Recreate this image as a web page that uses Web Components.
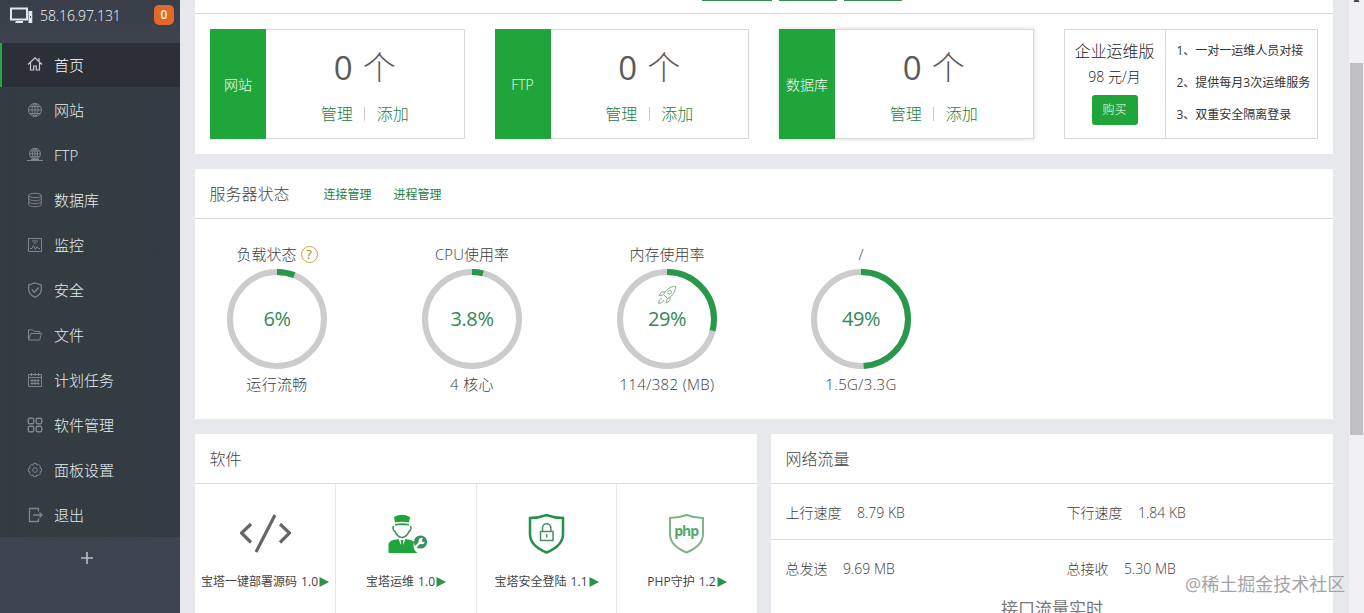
<!DOCTYPE html>
<html lang="zh-CN">
<head>
<meta charset="utf-8">
<title>服务器面板</title>
<style>
html,body{margin:0;height:100%;overflow:hidden}
body{font-family:"Open Sans","Noto Sans CJK SC",sans-serif;font-weight:300;font-size:14px;color:#444}
</style>
</head>
<body>
<panel-app></panel-app>
<script>
const define=(name,html)=>customElements.define(name,class extends HTMLElement{
  connectedCallback(){
    if(this.shadowRoot)return;
    const t=document.createElement('template');
    t.innerHTML='<style>*{box-sizing:border-box}:host{box-sizing:border-box;white-space:nowrap}</style>'+(typeof html==='function'?html(this):html);
    this.attachShadow({mode:'open'}).append(t.content.cloneNode(true));
  }
});
const a=(el,n,d='')=>el.getAttribute(n)??d;

const ICONS={
home:'<path d="M1 8.500 8 1.800 15 8.500M3.500 6.800V14h3.200v-4h2.600v4h3.200V6.800M12 2v3"/>',
globe:'<circle cx="8" cy="8" r="6.500"/><ellipse cx="8" cy="8" rx="3" ry="6.500"/><path d="M8 1.500v13M1.500 8h13M2.600 4.500h10.800M2.600 11.500h10.800"/>',
ftp:'<circle cx="8" cy="6.800" r="5.500"/><ellipse cx="8" cy="6.800" rx="2.500" ry="5.500"/><path d="M8 1.300v11M2.500 6.800h11M3.500 4h9M3.500 9.700h9M0 13.500h16M4 12.500h8"/>',
db:'<ellipse cx="8" cy="3.500" rx="6.300" ry="2.200"/><path d="M1.700 3.500v9c0 1.200 2.800 2.200 6.300 2.200s6.300-1 6.300-2.200v-9M1.700 6.500c0 1.200 2.800 2.200 6.300 2.200s6.300-1 6.300-2.200M1.700 9.500c0 1.200 2.800 2.200 6.300 2.200s6.300-1 6.300-2.200"/>',
monitor:'<path d="M1.500 1.500h13v13h-13zM5 4h6M6.500 6h3M3 11.500h2l1.500-3 2 4 1.500-3 1.500 2H13"/>',
shield:'<path stroke-width="1.300" d="M8 1 14.300 3v4.500c0 4-3 6.300-6.300 7.800-3.300-1.500-6.300-3.800-6.300-7.800V3zM4.800 7.500l2.500 2.700 4.300-4.700"/>',
folder:'<path d="M1.500 13V2.800h4.300l1.400 1.700h5.600v2M1.500 13l2.300-6.500h10.700L12.600 13z"/>',
calendar:'<path d="M1.500 2.500h13v12h-13zM1.500 5.500h13M4.500 1v3M8 1v3M11.500 1v3M3.500 8.500h9M3.500 11.500h9M5 7v6M8 7v6M11 7v6"/>',
grid:'<g stroke-width="1.400"><rect x="1.300" y="1.300" width="5.400" height="5.400" rx="1.200"/><rect x="9.300" y="1.300" width="5.400" height="5.400" rx="1.200"/><rect x="1.300" y="9.300" width="5.400" height="5.400" rx="1.200"/><rect x="9.300" y="9.300" width="5.400" height="5.400" rx="1.200"/></g>',
gear:'<circle cx="8" cy="8" r="2.300"/><path d="M6.700 1.400h2.600l.5 1.700 1.800-.6 1.900 1.900-.7 1.700 1.800.6v2.600l-1.800.6.7 1.800-1.900 1.800-1.800-.7-.5 1.800H6.700l-.5-1.800-1.800.7-1.900-1.800.7-1.800-1.800-.6V6.700l1.800-.6-.7-1.700 1.900-1.900 1.800.6z"/>',
exit:'<path stroke-width="1.300" d="M11.500 4.500v-3h-9v13h9v-3M6 8h9M12.500 5.500 15 8l-2.500 2.500"/>'
};

define('nav-item',el=>`<style>
:host{display:flex;align-items:center;height:45px;padding:0 0 2px 27px;font-size:15px;color:#e4eef0}
:host([active]){background:#2b2f38;border-left:2px solid #29a643;padding-left:25px;height:44px;color:#fff}
svg{width:16px;height:16px;margin-right:11px;fill:none;stroke:#7c888c;stroke-width:1}
:host([active]) svg{stroke:#c4cbd2;stroke-width:1.200}
</style><svg viewBox="0 0 16 16">${ICONS[a(el,'icon')]}</svg><slot></slot>`);

define('side-bar',`<style>
:host{display:flex;flex-direction:column;width:180px;height:613px;background:#3d434f}
header{display:flex;align-items:center;height:43px;padding:0 6px 13px 10px;color:#f2f7fa;font-size:14px;background:linear-gradient(#393e49,#3e444f)}
header svg{width:23px;height:17px;margin-right:7px}
.ip{flex:1;letter-spacing:-.1px}
.badge{width:20px;height:20px;border-radius:5px;background:#e2692c;color:#fff3d8;font-size:12px;font-weight:600;line-height:20px;text-align:center}
nav{background:linear-gradient(90deg,#333b43,#333d41 30%,#343c42 60%,#353a45);height:494px}
nav-item[active]+nav-item{margin-top:1px}
footer{padding:14px 0 0 80px}
footer svg{display:block;width:14px;height:14px;stroke:#b9c0c7;stroke-width:1.600}
</style>
<header><svg viewBox="0 0 23 17"><path d="M1 1.500h16v11H1z" fill="none" stroke="#dde9ef" stroke-width="2"/><path d="M6 14h7v2H5z" fill="#dde9ef"/><rect x="18.500" y="4" width="3.800" height="12" fill="#dde9ef"/><path d="M20.500 9v2" stroke="#4a5560"/></svg><span class="ip">58.16.97.131</span><span class="badge">0</span></header>
<nav>
<nav-item icon="home" active>首页</nav-item><nav-item icon="globe">网站</nav-item><nav-item icon="ftp">FTP</nav-item><nav-item icon="db">数据库</nav-item><nav-item icon="monitor">监控</nav-item><nav-item icon="shield">安全</nav-item><nav-item icon="folder">文件</nav-item><nav-item icon="calendar">计划任务</nav-item><nav-item icon="grid">软件管理</nav-item><nav-item icon="gear">面板设置</nav-item><nav-item icon="exit">退出</nav-item>
</nav><footer><svg viewBox="0 0 14 14"><path d="M7 1v12M1 7h12"/></svg></footer>`);

define('count-card',el=>`<style>
:host{display:flex;height:110px;border:1px solid #d9d9d9}
:host([raised]){box-shadow:0 0 4px rgba(0,0,0,.18)}
.tag{width:56px;margin:-1px 0 -1px -1px;background:#20a53a;color:#f6fff4;font-size:14px;display:flex;align-items:center;justify-content:center}
.body{flex:1;display:flex;flex-direction:column;align-items:center}
.num{font-size:33px;line-height:40px;margin-top:18px;color:#5a5a5a;display:flex;gap:10px}
.num span:first-child{font-weight:400}
.links{display:flex;align-items:center;font-size:16px;line-height:20px;margin-top:16px;color:#1f7d3e}
i{width:1px;height:14px;background:#ccc;margin:0 11.500px}
</style><div class="tag"><slot></slot></div><div class="body"><div class="num"><span>0</span><span>个</span></div><div class="links"><span>管理</span><i></i><span>添加</span></div></div>`);

define('plan-card',`<style>
:host{display:flex;height:110px;border:1px solid #d9d9d9;color:#222}
.l{width:101px;border-right:1px solid #d9d9d9;display:flex;flex-direction:column;align-items:center;padding-top:9px}
.t{font-size:16px;line-height:24px}.p{font-size:14px;line-height:20px;margin-top:4px}
.b{width:46px;height:30px;margin-top:8px;border-radius:3px;background:#20a53a;color:#f6fff4;font-size:12px;line-height:29px;text-align:center}
.r{padding:5px 0 0 11px;font-size:12px;line-height:32px;font-weight:400;color:#333}
</style><div class="l"><span class="t">企业运维版</span><span class="p">98 元/月</span><span class="b">购买</span></div>
<div class="r"><div>1、一对一运维人员对接</div><div>2、提供每月3次运维服务</div><div>3、双重安全隔离登录</div></div>`);

define('top-panel',`<style>
:host{display:flex;flex-direction:column;height:154px;background:#fff}
.bar{height:14px;border-bottom:1px solid #d9d9d9;display:flex;gap:7px;padding-left:507px}
.bar b{height:1px;background:#3c8f50;width:58px}.bar b:first-child{width:70px}
.row{display:grid;grid-template-columns:repeat(4,1fr);gap:30px;padding:15px 15px 0}
</style><div class="bar"><b></b><b></b><b></b></div><div class="row"><count-card>网站</count-card><count-card>FTP</count-card><count-card raised>数据库</count-card><plan-card></plan-card></div>`);

define('panel-box',`<style>
:host{display:block;background:#fff}
header{height:50px;border-bottom:1px solid #ddd;display:flex;align-items:center;padding:0 15px 1px 14.500px;font-size:16px;color:#444}
</style><header><slot name="head"></slot></header><slot></slot>`);

define('ring-gauge',el=>{const v=+a(el,'value'),r=47,c=2*Math.PI*r;return `<style>
:host{display:flex;flex-direction:column;align-items:center;font-size:15px;color:#3c3c3c}
.lab{height:20px;line-height:20px;display:flex;align-items:center;gap:4px}
.note{letter-spacing:.35px}
.ring{display:grid;width:100px;height:100px;margin:5px 0;place-items:center}
.ring>*{grid-area:1/1}
svg.c{width:100px;height:100px;fill:none;stroke-width:6}
.v{font-size:20px;line-height:24px;color:#2f8a55;font-weight:400;letter-spacing:-.4px}
.rk{align-self:start;margin-top:16px;width:20px;height:20px;fill:none;stroke:#7fae90}
.q{width:17px;height:17px;border:1px solid #c5a64a;border-radius:50%;color:#a8832a;font-size:13px;line-height:15px;text-align:center;font-weight:400}
</style><div class="lab"><slot></slot>${el.hasAttribute('help')?'<span class="q">?</span>':''}</div>
<div class="ring"><svg class="c" viewBox="0 0 100 100"><circle cx="50" cy="50" r="${r}" stroke="#ccc"/><circle cx="50" cy="50" r="${r}" stroke="#28994a" transform="rotate(-90 50 50)" stroke-dasharray="${c*v/100} ${c}"/></svg>
${el.hasAttribute('rocket')?'<svg class="rk" viewBox="0 0 20 20"><path d="M18.500 1.500C13 1.500 9.500 4 6.500 9.500l4 4C16 10.500 18.500 7 18.500 1.500zM8 7H4.500L2 10.500l4-.5M13 12v3.500L9.500 18l.5-4M5 13c-2 .5-3 2.500-3.500 5.500C4.500 18 6.500 17 7 15"/><circle cx="12.700" cy="7.300" r="1.800"/></svg>':''}
<span class="v">${a(el,'text')}</span></div><div class="lab note">${a(el,'note')}</div>`});

const SOFT={
code:'<path d="M11 10 1.500 19 11 28.500M40 10l9.500 9L40 28.500M35 1 16 38" fill="none" stroke="#666" stroke-width="3.200"/>',
police:'<g transform="translate(6.500 0)"><path d="M6.500 3q8-4.500 16 0l-1 5.500q-7-1.500-14 0zM7.500 10q7-1.500 14 0v1.500q-7-1-14 0z" fill="#20a53a"/><path d="M6.500 12.500c-2 0-1 4 1 5 1 3 4 6 7 6s6-3 7-6c2-1 3-5 1-5" fill="none" stroke="#4b8b6d" stroke-width="1.600"/><path d="M1 39V31q0-4 5-5l5-1 3.500 9 3.500-9 5 1 3.500 1.500q-2 8 3.500 11.500zM13 26h3l-.7 2 1 7-1.800 3-1.800-3 1-7z" fill="#20a53a"/><circle cx="33" cy="28" r="6.600" fill="#3d8f5b"/><path d="m28 33 5-5" stroke="#fff" stroke-width="2.200"/><path d="M35.500 24a3.200 3.200 0 1 0 1.800 4l-2.500-.3-.5-1.500z" fill="#fff"/></g>',
lock:'<g transform="translate(-1 -.5)" fill="none" stroke="#25904a"><path d="M25.500 1.500q-8 3-16.500 3v16c0 10 8 15 16.500 18.500C34 35.500 42 30.500 42 20.500v-16q-8.500 0-16.500-3z" stroke-width="2.500"/><path d="M19.500 18h12.500v9H19.500zM21.500 18v-3.500a4.200 4.200 0 0 1 8.400 0V18M25.700 20.500v3.500" stroke-width="1.500" stroke="#4f8d6b"/></g>',
php:'<g transform="translate(-1 -.5)"><path d="M25.500 1.500q-8 3-16.500 3v16c0 10 8 15 16.500 18.500C34 35.500 42 30.500 42 20.500v-16q-8.500 0-16.500-3z" fill="none" stroke="#7fb38a" stroke-width="2"/><text x="25.700" y="22" text-anchor="middle" font-family="Open Sans" font-size="14" font-weight="700" textLength="25" fill="#55a86a">php</text></g>'
};
define('soft-item',el=>`<style>
:host{display:flex;flex-direction:column;align-items:center;padding:30px 0 0 1px;border-right:1px solid #e6e6e6;height:129px;font-size:12px;color:#444;font-weight:400}
:host(:last-child){border:0}
svg.i{width:51px;height:40px}
div{display:flex;align-items:center;margin:19px 1px 0 0;line-height:18px;gap:1px;word-spacing:1px}
.p{width:10px;height:10px;fill:#2f9149}
</style><svg class="i" viewBox="0 0 51 40">${SOFT[a(el,'icon')]}</svg><div><slot></slot><svg class="p" viewBox="0 0 10 10"><path d="M.5 0 10 5 .5 10z"/></svg></div>`);

define('net-row',el=>`<style>
:host{display:grid;grid-template-columns:281px 1fr;height:56px;padding:0 15px 0 14.500px;align-items:center;font-size:14px;color:#3c3c3c}
:host([line]){border-bottom:1px solid #ddd}
span{display:flex;gap:15.500px}
b{font-weight:inherit}
b+b{padding-top:1px}
</style>${a(el,'items').split('|').map(p=>{const [k,v]=p.split(':');return `<span><b>${k}</b><b>${v}</b></span>`}).join('')}`);

define('scroll-track',`<style>
:host{display:flex;flex-direction:column;width:15px;height:613px;background:#f1f1f3;padding:0 1px}
svg{height:3px;width:13px;margin-bottom:60px}
i{height:372px;background:#c1c1c3}
</style><svg viewBox="0 0 13 3"><path d="M4.500 0h4l1 2h-6z" fill="#444"/></svg><i></i>`);

define('panel-app',`<style>
:host{display:flex;width:1364px;height:613px;overflow:hidden;background:#e6e8ec;position:relative}
main{flex:1;padding:0 16px 0 15px;display:flex;flex-direction:column;gap:15px;height:613px;overflow:hidden}
main>*{flex:none}
.state{height:250px}
a{font-size:12px;color:#23803f;font-weight:400;margin:1px 0 0 22px}
a:first-of-type{margin-left:34px}
.g{display:grid;grid-template-columns:195px 195px 194px 100px;padding:25px 0 0 32px}
.g ring-gauge{width:100px}
.two{display:grid;grid-template-columns:562px 562px;gap:14px;height:200px}
.soft{display:grid;grid-template-columns:141px 141px 140px 140px}
.chart{text-align:center;font-size:17px;line-height:24px;margin-top:1px;color:#777;font-weight:400}
.mark{position:absolute;left:1185px;top:572px;font-size:18px;line-height:24px;color:#a3a3a7;font-weight:400;text-shadow:0 0 1px #fff}
</style>
<side-bar></side-bar>
<main><top-panel></top-panel>
<panel-box class="state"><span slot="head">服务器状态</span><a slot="head">连接管理</a><a slot="head">进程管理</a>
<div class="g"><ring-gauge value="6" text="6%" note="运行流畅" help>负载状态</ring-gauge><ring-gauge value="3.8" text="3.8%" note="4 核心">CPU使用率</ring-gauge><ring-gauge value="29" text="29%" note="114/382 (MB)" rocket>内存使用率</ring-gauge><ring-gauge value="49" text="49%" note="1.5G/3.3G">/</ring-gauge></div></panel-box>
<div class="two"><panel-box><span slot="head">软件</span><div class="soft"><soft-item icon="code">宝塔一键部署源码 1.0</soft-item><soft-item icon="police">宝塔运维 1.0</soft-item><soft-item icon="lock">宝塔安全登陆 1.1</soft-item><soft-item icon="php">PHP守护 1.2</soft-item></div></panel-box>
<panel-box><span slot="head">网络流量</span><net-row line items="上行速度:8.79 KB|下行速度:1.84 KB"></net-row><net-row items="总发送:9.69 MB|总接收:5.30 MB"></net-row><div class="chart">接口流量实时</div></panel-box></div>
</main><scroll-track></scroll-track><div class="mark">@稀土掘金技术社区</div>`);
</script>
</body>
</html>
